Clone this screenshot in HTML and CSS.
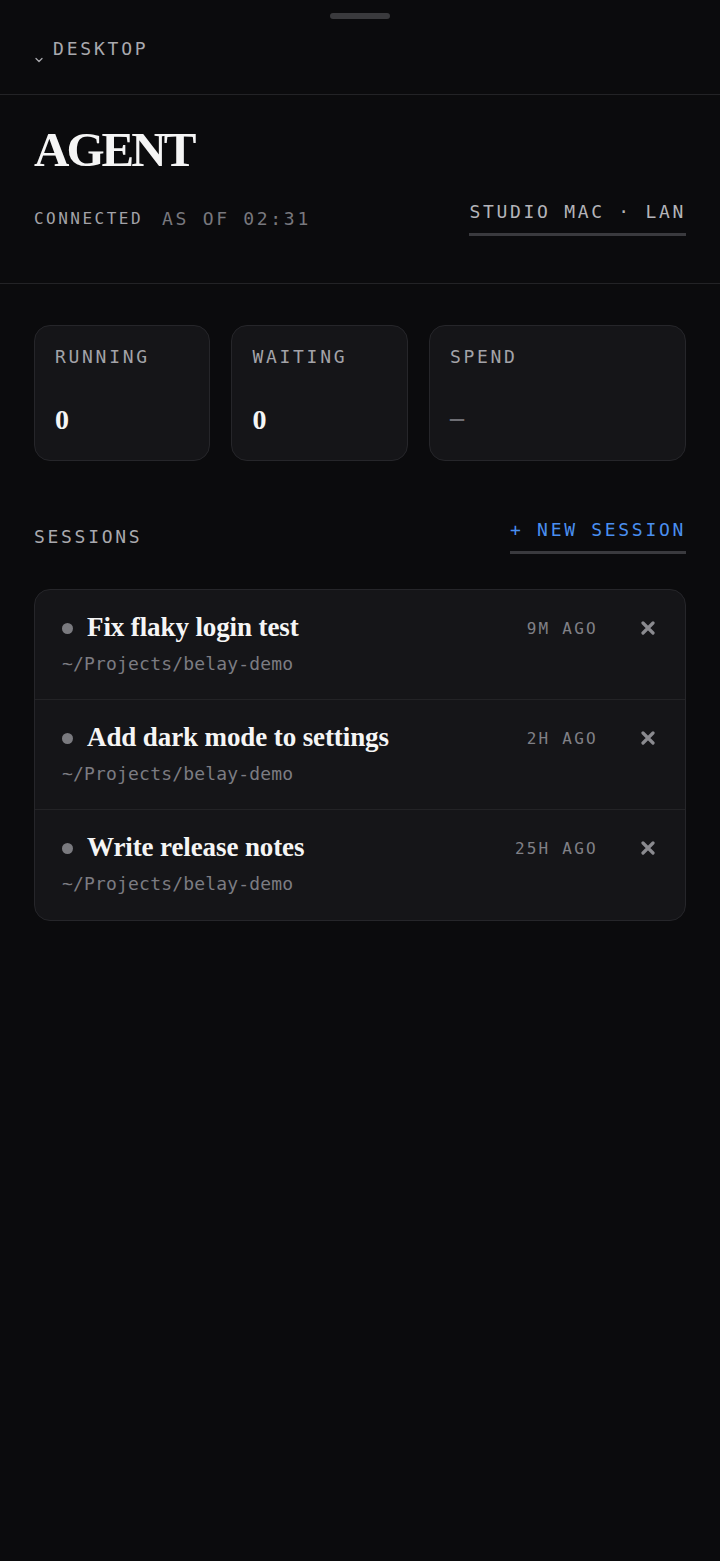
FILE: index.html
```html
<!DOCTYPE html>
<html lang="en">
<head>
    <meta charset="UTF-8">
    <meta name="viewport" content="width=device-width, initial-scale=1.0">
    <title>Agent</title>
    <link rel="stylesheet" href="styles.css">
</head>
<body>
    <div class="handle"></div>

    <div class="topbar">
        <svg class="chevron" width="8" height="6" viewBox="0 0 8 6">
            <path d="M1 1.5 L4 4.5 L7 1.5" fill="none" stroke="#a9a9ae" stroke-width="1.3" stroke-linecap="round" stroke-linejoin="round"/>
        </svg>
        <span class="topbar-label">DESKTOP</span>
    </div>

    <div class="agent">
        <h1>AGENT</h1>
        <div class="meta">
            <div class="status">
                <span class="connected">CONNECTED</span>
                <span class="as-of">AS OF 02:31</span>
            </div>
            <a class="host">STUDIO MAC · LAN</a>
        </div>
    </div>

    <div class="stats">
        <div class="stat">
            <div class="stat-label">RUNNING</div>
            <div class="stat-value">0</div>
        </div>
        <div class="stat">
            <div class="stat-label">WAITING</div>
            <div class="stat-value">0</div>
        </div>
        <div class="stat">
            <div class="stat-label">SPEND</div>
            <div class="stat-value empty">–</div>
        </div>
    </div>

    <div class="sessions-head">
        <span class="sessions-title">SESSIONS</span>
        <a class="new-session">+ NEW SESSION</a>
    </div>

    <div class="sessions">
        <div class="session">
            <div class="session-top">
                <span class="dot"></span>
                <span class="session-name">Fix flaky login test</span>
                <span class="session-time">9M AGO</span>
                <svg class="close" width="14" height="14" viewBox="0 0 14 14">
                    <path d="M2 2 L12 12 M12 2 L2 12" stroke="#8a8a8f" stroke-width="3.2" stroke-linecap="round"/>
                </svg>
            </div>
            <div class="session-path">~/Projects/belay-demo</div>
        </div>
        <div class="session">
            <div class="session-top">
                <span class="dot"></span>
                <span class="session-name">Add dark mode to settings</span>
                <span class="session-time">2H AGO</span>
                <svg class="close" width="14" height="14" viewBox="0 0 14 14">
                    <path d="M2 2 L12 12 M12 2 L2 12" stroke="#8a8a8f" stroke-width="3.2" stroke-linecap="round"/>
                </svg>
            </div>
            <div class="session-path">~/Projects/belay-demo</div>
        </div>
        <div class="session">
            <div class="session-top">
                <span class="dot"></span>
                <span class="session-name">Write release notes</span>
                <span class="session-time">25H AGO</span>
                <svg class="close" width="14" height="14" viewBox="0 0 14 14">
                    <path d="M2 2 L12 12 M12 2 L2 12" stroke="#8a8a8f" stroke-width="3.2" stroke-linecap="round"/>
                </svg>
            </div>
            <div class="session-path">~/Projects/belay-demo</div>
        </div>
    </div>
</body>
</html>
```

FILE: styles.css
```css
body {
    margin: 0;
    padding: 0;
    background-color: #0b0b0d;
    font-family: "DejaVu Sans Mono", monospace;
    color: #a9a9ae;
}
.handle {
    width: 60px;
    height: 6px;
    margin: 13px auto 0;
    border-radius: 3px;
    background-color: #3a3a3d;
}
.topbar {
    display: flex;
    align-items: flex-start;
    gap: 10px;
    padding: 19px 34px 31px 35px;
    border-bottom: 1px solid #232326;
}
.chevron {
    margin-top: 19px;
    flex-shrink: 0;
}
.topbar-label {
    font-size: 18px;
    line-height: 22px;
    letter-spacing: 0.155em;
    color: #a9a9ae;
}
.agent {
    padding: 30px 34px 47px;
    border-bottom: 1px solid #232326;
}
h1 {
    margin: 0;
    font-family: "Liberation Serif", serif;
    font-weight: bold;
    font-size: 49px;
    line-height: 1;
    letter-spacing: -0.06em;
    color: #f5f5f5;
}
.meta {
    display: flex;
    justify-content: space-between;
    align-items: flex-end;
    margin-top: 27px;
}
.status {
    display: flex;
    gap: 19px;
    margin-bottom: 7px;
}
.connected {
    font-size: 16px;
    line-height: 20px;
    letter-spacing: 0.155em;
    color: #a3a3a8;
}
.as-of {
    font-size: 18px;
    line-height: 20px;
    letter-spacing: 0.15em;
    color: #78787e;
}
.host,
.new-session {
    font-size: 18px;
    line-height: 22px;
    letter-spacing: 0.15em;
    padding-bottom: 10px;
    border-bottom: 3px solid #3a3a3e;
}
.host {
    color: #b4b4b9;
}
.stats {
    display: grid;
    grid-template-columns: 1fr 1fr 1.457fr;
    gap: 21px;
    padding: 41px 34px 0;
}
.stat {
    padding: 20px 20px 26px;
    background-color: #151518;
    border: 1px solid #26262a;
    border-radius: 16px;
}
.stat-label {
    font-size: 18px;
    line-height: 22px;
    letter-spacing: 0.15em;
    color: #a3a3a8;
}
.stat-value {
    margin-top: 38px;
    font-family: "Liberation Serif", serif;
    font-weight: bold;
    font-size: 28px;
    line-height: 1;
    color: #f5f5f5;
}
.stat-value.empty {
    margin-top: 35px;
    margin-bottom: 3px;
    color: #6e6e74;
}
.sessions-head {
    display: flex;
    justify-content: space-between;
    align-items: center;
    margin-top: 58px;
    padding: 0 34px;
}
.sessions-title {
    font-size: 18px;
    line-height: 22px;
    letter-spacing: 0.15em;
    color: #a9a9ae;
}
.new-session {
    color: #4a8ff0;
}
.sessions {
    margin: 35px 34px 0;
    background-color: #151518;
    border: 1px solid #26262a;
    border-radius: 16px;
}
.session {
    padding: 21px 30px 24px 27px;
}
.session + .session {
    border-top: 1px solid #232326;
}
.session:last-child {
    padding-bottom: 25px;
}
.session-top {
    display: flex;
    align-items: center;
}
.dot {
    width: 11px;
    height: 11px;
    border-radius: 50%;
    background-color: #7a7a7f;
    flex-shrink: 0;
    margin-right: 14px;
    margin-top: 2px;
}
.session-name {
    flex: 1;
    font-family: "Liberation Serif", serif;
    font-weight: bold;
    font-size: 27px;
    line-height: 32px;
    letter-spacing: -0.004em;
    color: #f5f5f5;
}
.session-time {
    padding-top: 3px;
    font-size: 16px;
    line-height: 20px;
    letter-spacing: 0.14em;
    color: #808086;
}
.close {
    margin-left: 43px;
    margin-top: 2px;
    flex-shrink: 0;
}
.session-path {
    margin-top: 10px;
    font-size: 18px;
    line-height: 22px;
    letter-spacing: 0.01em;
    color: #7c7c82;
}
```
